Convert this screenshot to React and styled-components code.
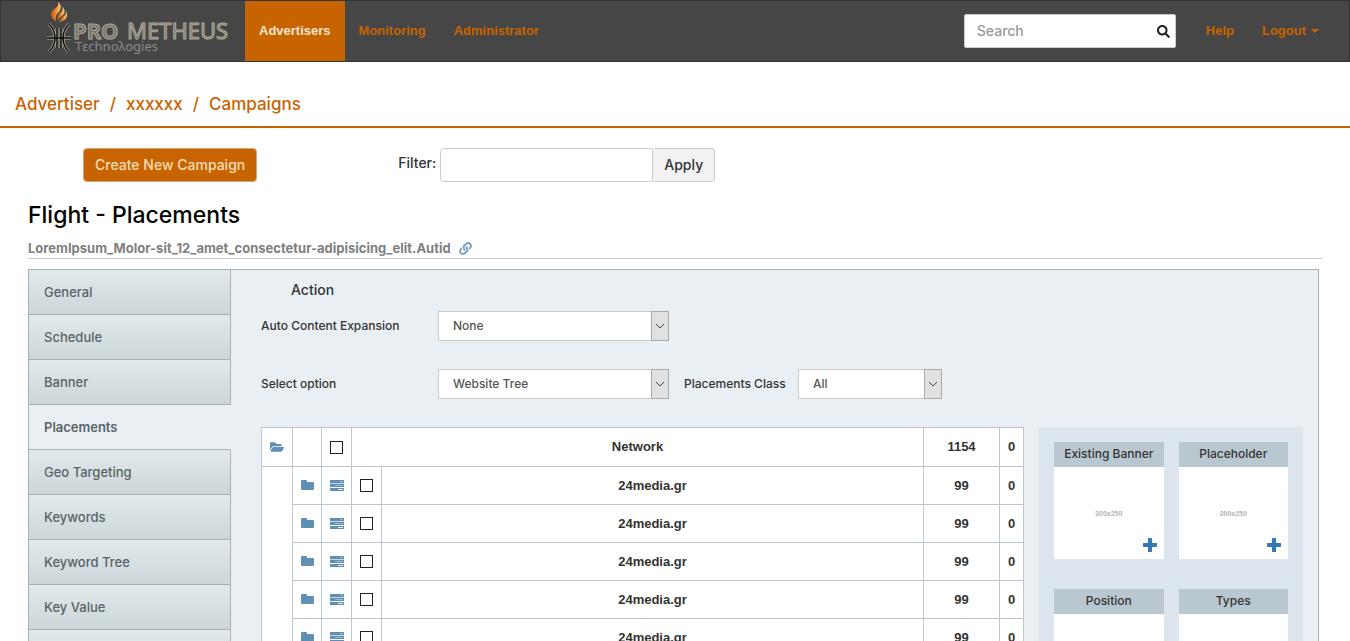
import React from "react";
import styled, { createGlobalStyle, css } from "styled-components";
import { FaFolderOpen, FaLink, FaSearch } from "react-icons/fa";

const ORANGE = "#c86400";
const LINE = "#bac7d3";
const BLUE = "#5f8fb3";
const HELVETICA = `"Liberation Sans", Arial, sans-serif`;

const GlobalStyle = createGlobalStyle`
  * {
    box-sizing: border-box;
  }

  body {
    margin: 0;
    background: #fff;
    color: #333;
    font-family: Inter, ${HELVETICA};
    font-size: 13px;
    font-weight: 500;
    line-height: 20px;
  }

  a {
    color: inherit;
    text-decoration: none;
  }

  button,
  input,
  select {
    font: inherit;
    color: inherit;
  }
`;

const Navbar = styled.nav`
  display: flex;
  align-items: stretch;
  min-height: 62px;
  padding: 0 16px 0 44px;
  border: 1px solid #333;
  background: #464646;
`;

const Brand = styled.a`
  margin-right: 12px;

  svg {
    display: block;
  }
`;

const NavList = styled.ul`
  display: flex;
  margin: 0;
  padding: 0;
  list-style: none;
`;

const NavLink = styled.a`
  display: flex;
  align-items: center;
  gap: 5px;
  height: 100%;
  padding: 0 14px;
  font-family: ${HELVETICA};
  font-weight: 700;
  color: ${ORANGE};

  ${(props) =>
    props.$active &&
    css`
      background: ${ORANGE};
      color: #f5e6d0;
    `}
`;

const Caret = styled.span`
  border: 4px solid transparent;
  border-top-color: currentColor;
  border-bottom: 0;
`;

const SearchForm = styled.form`
  display: flex;
  align-items: center;
  align-self: center;
  width: 212px;
  height: 34px;
  margin: 0 16px 0 auto;
  padding: 0 5px 0 12px;
  border: 1px solid #ccc;
  border-radius: 2px;
  background: #fff;
`;

const SearchInput = styled.input`
  flex: 1;
  min-width: 0;
  padding: 0;
  border: 0;
  outline: 0;
  font-size: 14px;

  &::placeholder {
    color: #999;
    opacity: 1;
  }
`;

const IconButton = styled.button`
  display: flex;
  padding: 0;
  border: 0;
  background: none;
  color: ${(props) => props.$color || "#222"};
`;

const Breadcrumb = styled.nav`
  display: flex;
  gap: 10px;
  padding: 32px 15px 12px;
  border-bottom: 2px solid ${ORANGE};
  color: ${ORANGE};
  font-size: 17px;
`;

const Toolbar = styled.div`
  display: flex;
  padding: 20px 83px 0;
`;

const CreateButton = styled.button`
  height: 34px;
  margin-right: 141px;
  padding: 0 11px;
  border: 1px solid #d2a67a;
  border-radius: 4px;
  background: ${ORANGE};
  color: #f8dcb8;
  font-size: 14px;
`;

const FilterForm = styled.form`
  display: flex;
  font-size: 14px;
`;

const FilterLabel = styled.label`
  padding: 5px 4px 0 0;
`;

const FilterInput = styled.input`
  width: 213px;
  height: 34px;
  border: 1px solid #ccc;
  border-radius: 4px 2px 2px 4px;
`;

const ApplyButton = styled.button`
  height: 34px;
  padding: 0 11px;
  border: 1px solid #ccc;
  border-left: 0;
  border-radius: 2px 4px 4px 2px;
  background: #f2f2f2;
`;

const Main = styled.main`
  padding: 20px 28px 0;
`;

const Title = styled.h1`
  margin: 0;
  color: #000;
  font-size: 23px;
  font-weight: 500;
  line-height: 26px;
`;

const FlightName = styled.div`
  display: flex;
  align-items: center;
  gap: 8px;
  margin: 10px 0;
  border-bottom: 1px solid #ccc;
  color: #808080;
  font-weight: 700;
`;

const Panel = styled.div`
  display: flex;
  margin-right: 3px;
  border: 1px solid #a8b0b5;
  background: #eaeff4;
`;

const Tabs = styled.nav`
  flex: none;
  width: 202px;
`;

const Tab = styled.a`
  display: block;
  height: 45px;
  padding: 12px 15px;
  border-right: 1px solid #a8b0b5;
  border-bottom: 1px solid #a8b0b5;
  background: linear-gradient(#e1e9ec, #cdd6d9);
  color: #5a6467;

  ${(props) =>
    props.$active &&
    css`
      border-right-color: transparent;
      background: none;
      font-weight: 600;
    `}
`;

const Content = styled.section`
  flex: 1;
  min-width: 0;
  padding: 10px 15px 15px 30px;
`;

const Action = styled.h2`
  margin: 0 0 11px 30px;
  font-size: 14px;
  font-weight: 500;
  line-height: 20px;
`;

const FormRow = styled.div`
  display: flex;
  align-items: center;
  gap: 15px;
  margin-bottom: 28px;
  font-size: 12px;
`;

const FieldLabel = styled.label`
  width: ${(props) => props.$width};
  white-space: nowrap;
`;

const SelectBox = styled.div`
  display: grid;
  width: ${(props) => props.$width};
  height: 30px;
`;

const Select = styled.select`
  grid-area: 1 / 1;
  padding: 0 14px;
  border: 1px solid #ccc;
  border-radius: 0;
  background: #fff;
  color: #555;
  appearance: none;
`;

const SelectArrow = styled.span`
  grid-area: 1 / 1;
  display: flex;
  align-items: center;
  justify-content: center;
  justify-self: end;
  width: 18px;
  border: 1px solid #aaa;
  background: #e1e1e1;
  pointer-events: none;
`;

const Columns = styled.div`
  display: flex;
  align-items: flex-start;
  gap: 15px;
`;

const Table = styled.table`
  flex: 1;
  border-collapse: collapse;
  table-layout: fixed;
  background: #fff;
  font-family: ${HELVETICA};
  text-align: center;
`;

const Cell = styled.td`
  height: ${(props) => (props.$head ? 39 : 38)}px;
  padding: 0;
  border: 1px solid ${LINE};
  font-weight: 700;

  svg {
    display: block;
    margin: 0 auto;
    color: ${BLUE};
  }
`;

const Checkbox = styled.input.attrs({ type: "checkbox" })`
  display: block;
  width: 13px;
  height: 13px;
  margin: 0 auto;
  border: 1px solid #222;
  background: #fff;
  appearance: none;
`;

const Aside = styled.aside`
  display: grid;
  flex: none;
  grid-template-columns: 1fr 1fr;
  gap: 30px 15px;
  width: 264px;
  padding: 15px;
  background: #dce4ed;
`;

const CardTitle = styled.h3`
  margin: 0;
  padding-bottom: 1px;
  background: #b9c8d0;
  font-size: 12px;
  font-weight: 500;
  line-height: 24px;
  text-align: center;
`;

const CardBody = styled.div`
  display: flex;
  flex-direction: column;
  align-items: center;
  justify-content: space-between;
  height: 92px;
  padding: 42px 7px 7px;
  background: #fff;
  color: #b4b4b4;
  font-family: ${HELVETICA};
  font-size: 7px;
  font-weight: 700;
  line-height: 9px;

  button {
    align-self: flex-end;
  }
`;

const MARK = "M4 23c8 8 8 20 0 28M24 23c-8 8-8 20 0 28M12 27v20M16 27v20M2 37h24";

const Logo = () => (
  <svg width="188" height="60" viewBox="0 0 188 60" role="img" aria-label="Prometheus Technologies">
    <defs>
      <linearGradient id="flame" x1="0" y1="0" x2="1" y2="0">
        <stop offset="0" stopColor="#c04f10" />
        <stop offset="0.5" stopColor="#ee8a2e" />
        <stop offset="1" stopColor="#f7c98a" />
      </linearGradient>
    </defs>
    <path d="M11 20c-5-3-7-7-3-11 4-3 6-4 5-8 3 2 4 6 1 10-3 3-4 5-3 9z" fill="url(#flame)" />
    <path d="M12 20c0-4 1-6 4-9 2-2 2-4 1-6 4 4 3 8 0 10-2 2-4 3-5 5z" fill="url(#flame)" />
    <path d="M14 21c1-3 3-4 5-6 2-1 2-3 2-5 3 5 0 10-7 11z" fill="url(#flame)" />
    <path d={MARK} fill="none" stroke="#b3ad9a" strokeWidth="3" />
    <path d={MARK} fill="none" stroke="#0c0c0c" strokeWidth="1.5" />
    <g
      fontFamily="'Noto Sans', sans-serif"
      fontSize="22"
      fill="#77756d"
      stroke="#aca896"
      strokeWidth="1"
    >
      <text x="28" y="38" fontWeight="700">PRO</text>
      <text x="82" y="38" fontWeight="400">METHEUS</text>
    </g>
    <text x="30" y="50" fontFamily="'Noto Sans', sans-serif" fontSize="13" fontWeight="400" fill="#8b8b8b">
      Tεchnoλogies
    </text>
  </svg>
);

const FolderIcon = () => (
  <svg width="13" height="11" viewBox="0 0 13 11" fill="currentColor">
    <path d="M0 1q0-1 1-1h4q1 0 1 1v1h6q1 0 1 1v6q0 1-1 1H1q-1 0-1-1z" />
  </svg>
);

const TasksIcon = () => (
  <svg width="14" height="11" viewBox="0 0 14 11">
    <path d="M0 0h14v3H0zM0 4h14v3H0zM0 8h14v3H0z" fill="currentColor" />
    <path d="M10 1h3v1h-3zM5 5h8v1H5z" fill="#9dbad2" />
    <path d="M8 9h5v1H8z" fill="#e8f0f6" />
    <path d="M0 3h14v1H0z" fill="#c3d4e2" />
  </svg>
);

const PlusIcon = () => (
  <svg width="14" height="14" viewBox="0 0 14 14" fill="currentColor">
    <path d="M5.500 0h3l.5.5V5h4.500l.5.5v3l-.5.5H9v4.500l-.5.5h-3l-.5-.5V9H.5L0 8.500v-3L.5 5H5V.5z" />
  </svg>
);

const SelectField = ({ id, label, value, labelWidth, width }) => (
  <>
    <FieldLabel htmlFor={id} $width={labelWidth}>
      {label}
    </FieldLabel>
    <SelectBox $width={width}>
      <Select id={id} defaultValue={value}>
        <option>{value}</option>
      </Select>
      <SelectArrow>
        <svg width="10" height="6" viewBox="0 0 10 6" fill="none" stroke="#444">
          <path d="M1 1l4 4 4-4" />
        </svg>
      </SelectArrow>
    </SelectBox>
  </>
);

const TABS = [
  "General",
  "Schedule",
  "Banner",
  "Placements",
  "Geo Targeting",
  "Keywords",
  "Keyword Tree",
  "Key Value",
  "",
];

const SITES = Array.from({ length: 5 }, () => ({ name: "24media.gr", total: 99, selected: 0 }));

const CARDS = ["Existing Banner", "Placeholder", "Position", "Types"];

const App = () => (
  <>
    <GlobalStyle />
    <Navbar>
      <Brand href="#">
        <Logo />
      </Brand>
      <NavList>
        <li>
          <NavLink href="#" $active>
            Advertisers
          </NavLink>
        </li>
        <li>
          <NavLink href="#">Monitoring</NavLink>
        </li>
        <li>
          <NavLink href="#">Administrator</NavLink>
        </li>
      </NavList>
      <SearchForm>
        <SearchInput type="text" placeholder="Search" aria-label="Search" />
        <IconButton type="button" aria-label="Search">
          <FaSearch size={13} />
        </IconButton>
      </SearchForm>
      <NavList>
        <li>
          <NavLink href="#">Help</NavLink>
        </li>
        <li>
          <NavLink href="#">
            Logout
            <Caret />
          </NavLink>
        </li>
      </NavList>
    </Navbar>

    <Breadcrumb>
      <a href="#">Advertiser</a>
      <span>/</span>
      <a href="#">xxxxxx</a>
      <span>/</span>
      <a href="#">Campaigns</a>
    </Breadcrumb>

    <Toolbar>
      <CreateButton type="button">Create New Campaign</CreateButton>
      <FilterForm>
        <FilterLabel htmlFor="filter">Filter:</FilterLabel>
        <FilterInput id="filter" type="text" />
        <ApplyButton type="button">Apply</ApplyButton>
      </FilterForm>
    </Toolbar>

    <Main>
      <Title>Flight - Placements</Title>
      <FlightName>
        LoremIpsum_Molor-sit_12_amet_consectetur-adipisicing_elit.Autid
        <FaLink size={13} color="#7ba0c0" />
      </FlightName>

      <Panel>
        <Tabs>
          {TABS.map((tab, index) => (
            <Tab key={index} href="#" $active={tab === "Placements"}>
              {tab}
            </Tab>
          ))}
        </Tabs>
        <Content>
          <Action>Action</Action>
          <FormRow>
            <SelectField
              id="expansion"
              label="Auto Content Expansion"
              value="None"
              labelWidth="162px"
              width="231px"
            />
          </FormRow>
          <FormRow>
            <SelectField
              id="option"
              label="Select option"
              value="Website Tree"
              labelWidth="162px"
              width="231px"
            />
            <SelectField
              id="class"
              label="Placements Class"
              value="All"
              labelWidth="99px"
              width="144px"
            />
          </FormRow>

          <Columns>
            <Table>
              <colgroup>
                <col width="31" />
                <col width="29" />
                <col width="30" />
                <col width="30" />
                <col />
                <col width="76" />
                <col width="24" />
              </colgroup>
              <thead>
                <tr>
                  <Cell $head>
                    <FaFolderOpen size={14} />
                  </Cell>
                  <Cell $head />
                  <Cell $head>
                    <Checkbox aria-label="Select network" />
                  </Cell>
                  <Cell $head as="th" colSpan={2}>
                    Network
                  </Cell>
                  <Cell $head>1154</Cell>
                  <Cell $head>0</Cell>
                </tr>
              </thead>
              <tbody>
                {SITES.map((site, index) => (
                  <tr key={index}>
                    {index === 0 && <Cell rowSpan={SITES.length} />}
                    <Cell>
                      <FolderIcon />
                    </Cell>
                    <Cell>
                      <TasksIcon />
                    </Cell>
                    <Cell>
                      <Checkbox aria-label={site.name} />
                    </Cell>
                    <Cell>{site.name}</Cell>
                    <Cell>{site.total}</Cell>
                    <Cell>{site.selected}</Cell>
                  </tr>
                ))}
              </tbody>
            </Table>
            <Aside>
              {CARDS.map((card) => (
                <div key={card}>
                  <CardTitle>{card}</CardTitle>
                  <CardBody>
                    300x250
                    <IconButton type="button" $color="#337ab7" aria-label={`Add ${card}`}>
                      <PlusIcon />
                    </IconButton>
                  </CardBody>
                </div>
              ))}
            </Aside>
          </Columns>
        </Content>
      </Panel>
    </Main>
  </>
);

export default App;
